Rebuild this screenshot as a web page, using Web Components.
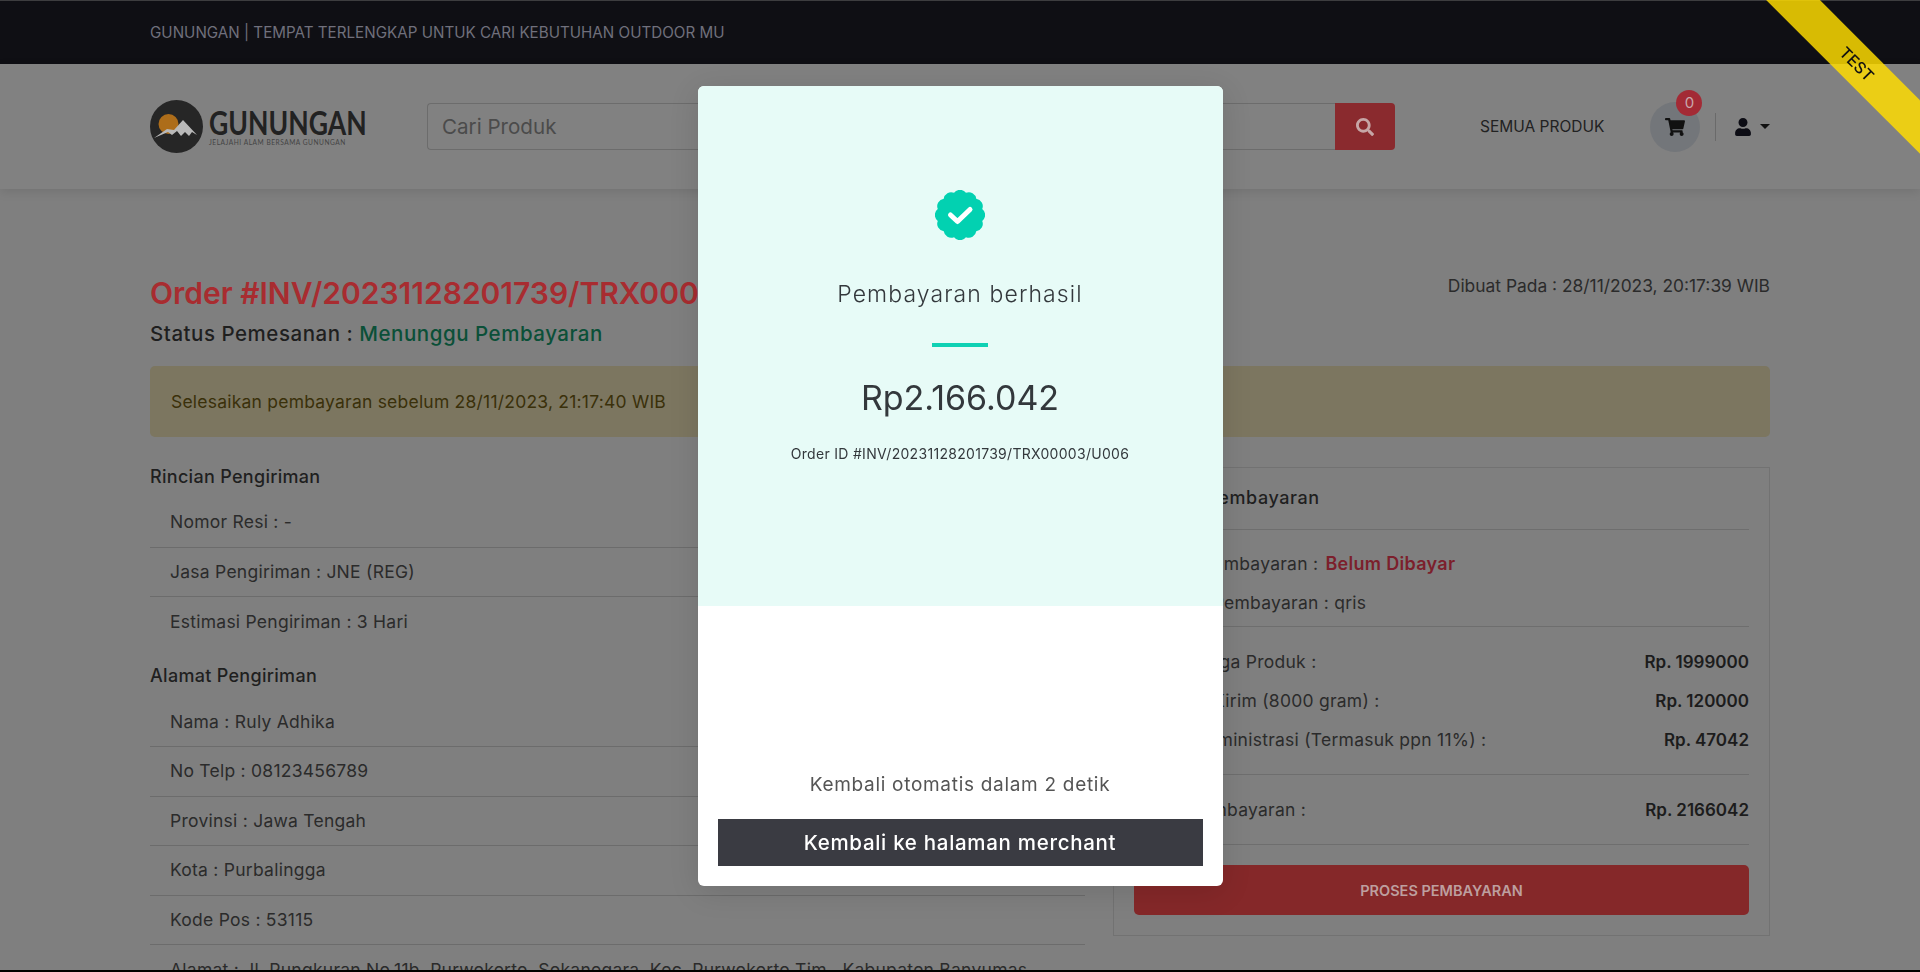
<!DOCTYPE html>
<html lang="id">
<head>
<meta charset="utf-8">
<title>Gunungan</title>
<style>
    html, body { margin: 0; height: 100%; overflow: hidden; }
    body {
        background: #7f7f7f;
        border-top: 1px solid #3d3d3f;
        box-sizing: border-box;
        color: #262626;
        font-family: Inter, "Noto Sans", sans-serif;
    }
    .screen-edge { position: fixed; left: 0; right: 0; bottom: 0; height: 2px; background: #000; z-index: 30; }
</style>
</head>
<body>
<top-bar>GUNUNGAN | TEMPAT TERLENGKAP UNTUK CARI KEBUTUHAN OUTDOOR MU</top-bar>
<site-header></site-header>
<order-page></order-page>
<pay-modal></pay-modal>
<test-ribbon>TEST</test-ribbon>
<div class="screen-edge"></div>

<script>
class TopBar extends HTMLElement {
    constructor() {
        super();
        this.attachShadow({mode: 'open'}).innerHTML = `
            <style>
                :host { display: flex; align-items: center; height: 63px; padding: 0 150px; background: #0f0f14; color: #70707c; font-size: 15.2px; }
            </style>
            <slot></slot>
        `;
    }
}

class SiteHeader extends HTMLElement {
    constructor() {
        super();
        this.attachShadow({mode: 'open'}).innerHTML = `
            <style>
                :host { display: flex; align-items: center; height: 125px; padding: 0 150px; background: #818181; box-shadow: 0 3px 10px rgba(0,0,0,.1); position: relative; }
                .logo { display: flex; align-items: center; gap: 6px; width: 277px; flex: none; }
                .logo svg { width: 53px; height: 53px; flex: none; }
                .brand { padding-top: 1px; }
                .name { display: block; width: 156px; color: #222; font: 700 33px/28px Lato, sans-serif; transform: scaleX(.805); transform-origin: left; white-space: nowrap; }
                .tag { display: block; font: 400 6.6px/9px Lato, sans-serif; letter-spacing: .52px; color: #444; margin-top: 2px; white-space: nowrap; }
                .search { display: flex; width: 968px; height: 47px; flex: none; }
                .search .field { flex: 1; display: flex; align-items: center; box-sizing: border-box; padding-left: 14px; border: 1px solid #6c6c6c; border-right: 0; border-radius: 4px 0 0 4px; color: #4b4b4b; font-size: 20.6px; }
                .search .go { width: 60px; background: #8a2a2e; border-radius: 0 4px 4px 0; display: flex; align-items: center; justify-content: center; }
                .search svg { width: 18px; height: 18px; fill: #c6a6a6; }
                .all { margin-left: 85px; font-size: 15.5px; color: #222; white-space: nowrap; }
                .cart { margin-left: 46px; width: 50px; height: 50px; border-radius: 50%; background: #73767a; display: flex; align-items: center; justify-content: center; position: relative; flex: none; }
                .cart svg { width: 20px; height: 18px; fill: #111; }
                .badge { position: absolute; top: -12px; right: -2px; width: 26px; height: 26px; border-radius: 50%; background: #a32a35; color: #c9a8ac; font-size: 15px; display: flex; align-items: center; justify-content: center; }
                .sep { margin-left: 15px; width: 1px; height: 28px; background: #6a6a6a; }
                .user { margin-left: 19px; width: 16px; height: 18px; fill: #0c0c14; flex: none; }
                .caret { margin-left: 9px; width: 0; height: 0; border: 5px solid transparent; border-top-color: #111; border-bottom: 0; }
            </style>
            <div class="logo">
                <svg viewBox="0 0 53 53">
                    <circle cx="26.5" cy="26.5" r="26.5" fill="#262626"/>
                    <circle cx="18.5" cy="24" r="10" fill="#ad6d1a"/>
                    <path d="M4 38 L17 29 L24 30 L33 20 L47 35 L42 32 L39 36 L35 32 L31 36 L27 31 L22 35 L18 32 L11 35 Z" fill="#b9b9b9"/>
                </svg>
                <div class="brand"><span class="name">GUNUNGAN</span><span class="tag">JELAJAHI ALAM BERSAMA GUNUNGAN</span></div>
            </div>
            <div class="search">
                <div class="field">Cari Produk</div>
                <div class="go"><svg viewBox="0 0 512 512"><path d="M505 442.7L405.3 343c-4.5-4.5-10.6-7-17-7H372c27.6-35.3 44-79.7 44-128C416 93.1 322.9 0 208 0S0 93.1 0 208s93.1 208 208 208c48.3 0 92.7-16.4 128-44v16.3c0 6.4 2.5 12.5 7 17l99.7 99.7c9.4 9.4 24.6 9.4 33.9 0l28.3-28.3c9.4-9.4 9.4-24.6.1-34zM208 336c-70.7 0-128-57.2-128-128 0-70.7 57.2-128 128-128 70.7 0 128 57.2 128 128 0 70.7-57.2 128-128 128z"/></svg></div>
            </div>
            <div class="all">SEMUA PRODUK</div>
            <div class="cart">
                <svg viewBox="0 0 576 512"><path d="M528.12 301.319l47.273-208C578.806 78.301 567.391 64 551.99 64H159.208l-9.166-44.81C147.758 8.021 137.93 0 126.529 0H24C10.745 0 0 10.745 0 24v16c0 13.255 10.745 24 24 24h69.883l70.248 343.435C147.325 417.1 136 435.222 136 456c0 30.928 25.072 56 56 56s56-25.072 56-56c0-15.674-6.447-29.835-16.824-40h209.647C430.447 426.165 424 440.326 424 456c0 30.928 25.072 56 56 56s56-25.072 56-56c0-22.172-12.888-41.332-31.579-50.405l5.517-24.276c3.413-15.018-8.002-29.319-23.403-29.319H218.117l-6.545-32h293.145c11.206 0 20.92-7.754 23.403-18.681z"/></svg>
                <span class="badge">0</span>
            </div>
            <div class="sep"></div>
            <svg class="user" viewBox="0 0 448 512"><path d="M224 256c70.7 0 128-57.3 128-128S294.7 0 224 0 96 57.3 96 128s57.3 128 128 128zm89.6 32h-16.7c-22.2 10.2-46.9 16-72.9 16s-50.6-5.8-72.9-16h-16.7C60.2 288 0 348.2 0 422.4V464c0 26.5 21.5 48 48 48h352c26.5 0 48-21.5 48-48v-41.6c0-74.2-60.2-134.4-134.4-134.4z"/></svg>
            <div class="caret"></div>
        `;
    }
}

class ListRow extends HTMLElement {
    constructor() {
        super();
        this.attachShadow({mode: 'open'}).innerHTML = `
            <style>
                :host { display: flex; align-items: center; box-sizing: border-box; height: 49.6px; padding: 0 20px 1px; border-bottom: 1px solid #6c6c6c; font-size: 17.5px; letter-spacing: .25px; color: #2b2b2b; white-space: nowrap; }
                :host(:last-of-type) { border-bottom: 0; }
            </style>
            <slot></slot>
        `;
    }
}

class PayRow extends HTMLElement {
    constructor() {
        super();
        this.attachShadow({mode: 'open'}).innerHTML = `
            <style>
                :host { display: flex; justify-content: space-between; align-items: center; height: 39px; font-size: 17.5px; letter-spacing: .25px; color: #2b2b2b; white-space: nowrap; }
                .label { padding-left: 9px; }
                .val { font-size: 17px; letter-spacing: 0; font-weight: 600; color: #1c1c1c; }
            </style>
            <span class="label"><slot></slot></span>
            <span class="val"><slot name="value"></slot></span>
        `;
    }
}

class PayCard extends HTMLElement {
    constructor() {
        super();
        this.attachShadow({mode: 'open'}).innerHTML = `
            <style>
                :host { display: block; box-sizing: border-box; height: 469px; margin-top: 4px; padding: 16px 20px 0; border: 1px solid #727272; }
                h4 { margin: 0; font: 500 18px/27px Inter, sans-serif; letter-spacing: .57px; color: #1f1f1f; }
                hr { border: 0; border-top: 1px solid #6e6e6e; margin: 0; }
                .s1 { padding-top: 14px; }
                .s2 { padding: 15px 0 0; }
                .s3 { padding: 15px 0 15px; }
                .late { margin-left: 2px; font-size: 18px; letter-spacing: .3px; font-weight: 600; color: #7c1f2c; }
                button { display: block; width: 100%; height: 50px; margin-top: 20px; border: 0; border-radius: 5px; background: #852829; color: #bd9f9f; font: 600 14.5px Inter, sans-serif; }
            </style>
            <h4>Rincian Pembayaran</h4>
            <hr style="margin-top:18px">
            <div class="s1">
                <pay-row>Status Pembayaran : <span class="late">Belum Dibayar</span></pay-row>
                <pay-row>Metode Pembayaran : qris</pay-row>
            </div>
            <hr style="margin-top:4px">
            <div class="s2">
                <pay-row>Total Harga Produk :<span slot="value">Rp. 1999000</span></pay-row>
                <pay-row>Ongkos Kirim (8000 gram) :<span slot="value">Rp. 120000</span></pay-row>
                <pay-row>Biaya Administrasi (Termasuk ppn 11%) :<span slot="value">Rp. 47042</span></pay-row>
            </div>
            <hr style="margin-top:15px">
            <div class="s3">
                <pay-row>Total Pembayaran :<span slot="value">Rp. 2166042</span></pay-row>
            </div>
            <hr>
            <button>PROSES PEMBAYARAN</button>
        `;
    }
}

class OrderPage extends HTMLElement {
    constructor() {
        super();
        this.attachShadow({mode: 'open'}).innerHTML = `
            <style>
                :host { display: block; padding: 84px 150px 0; }
                .top { display: flex; justify-content: space-between; }
                h1 { margin: 0; font: 600 30px/40px Inter, sans-serif; color: #a82c30; white-space: nowrap; }
                .made { font-size: 17.4px; line-height: 27px; margin-top: -1px; color: #2b2b2b; }
                .status { margin-top: 6px; font: 500 20.5px/30px Inter, sans-serif; letter-spacing: .53px; color: #1f1f1f; }
                .status span { color: #0b5038; }
                .alert { margin-top: 17px; height: 71px; box-sizing: border-box; padding-left: 21px; display: flex; align-items: center; background: #7c7660; border-radius: 5px; color: #3a300a; font-size: 17.5px; letter-spacing: .22px; }
                .cols { display: grid; grid-template-columns: 935px 657px; gap: 28px; margin-top: 26px; }
                h5 { margin: 0 0 7px; font: 500 18px/28px Inter, sans-serif; letter-spacing: .3px; color: #1f1f1f; }
                h5.next { margin-top: 15.2px; margin-bottom: 7.4px; }
            </style>
            <div class="top">
                <h1>Order #INV/20231128201739/TRX00003/U006</h1>
                <div class="made">Dibuat Pada : 28/11/2023, 20:17:39 WIB</div>
            </div>
            <div class="status">Status Pemesanan : <span>Menunggu Pembayaran</span></div>
            <div class="alert">Selesaikan pembayaran sebelum 28/11/2023, 21:17:40 WIB</div>
            <div class="cols">
                <section>
                    <h5>Rincian Pengiriman</h5>
                    <div>
                        <list-row>Nomor Resi : -</list-row>
                        <list-row>Jasa Pengiriman : JNE (REG)</list-row>
                        <list-row>Estimasi Pengiriman : 3 Hari</list-row>
                    </div>
                    <h5 class="next">Alamat Pengiriman</h5>
                    <div>
                        <list-row>Nama : Ruly Adhika</list-row>
                        <list-row>No Telp : 08123456789</list-row>
                        <list-row>Provinsi : Jawa Tengah</list-row>
                        <list-row>Kota : Purbalingga</list-row>
                        <list-row>Kode Pos : 53115</list-row>
                        <list-row>Alamat : Jl. Pungkuran No.11b, Purwokerto, Sokanegara, Kec. Purwokerto Tim., Kabupaten Banyumas</list-row>
                    </div>
                </section>
                <pay-card></pay-card>
            </div>
        `;
    }
}

class PayModal extends HTMLElement {
    constructor() {
        super();
        this.attachShadow({mode: 'open'}).innerHTML = `
            <style>
                :host { position: fixed; inset: 0; z-index: 10; display: flex; align-items: center; justify-content: center; }
                .box { width: 525px; height: 800px; background: #fff; border-radius: 6px; overflow: hidden; display: flex; flex-direction: column; box-shadow: 0 6px 30px rgba(0,0,0,.12); }
                .paid { height: 520px; flex: none; box-sizing: border-box; padding-top: 104px; background: #e7fbf7; display: flex; flex-direction: column; align-items: center; color: #33383c; }
                .paid svg { width: 50px; height: 50px; flex: none; }
                .title { margin-top: 38px; font-size: 23px; letter-spacing: 1.1px; line-height: 32px; font-weight: 300; }
                .line { margin-top: 33px; width: 56px; height: 4px; background: #0fd1b4; }
                .amount { margin-top: 26px; font-size: 34px; line-height: 50px; font-weight: 400; }
                .oid { margin-top: 21px; font-size: 14px; letter-spacing: .3px; line-height: 20px; }
                .back { flex: 1; display: flex; flex-direction: column; justify-content: flex-end; align-items: center; padding: 0 20px 20px; }
                .auto { font-size: 19px; letter-spacing: .7px; line-height: 26px; color: #555; margin-bottom: 21px; }
                button { width: 100%; height: 47px; border: 0; background: #3a3b42; color: #fff; font: 500 20.5px Inter, sans-serif; letter-spacing: .7px; }
            </style>
            <div class="box">
                <div class="paid">
                    <svg viewBox="0 0 50 50"><path id="seal" fill="#02d1b1"/><polyline points="15.5,25 22.5,31.5 35,19.5" fill="none" stroke="#fff" stroke-width="5" stroke-linecap="round" stroke-linejoin="round"/></svg>
                    <div class="title">Pembayaran berhasil</div>
                    <div class="line"></div>
                    <div class="amount">Rp2.166.042</div>
                    <div class="oid">Order ID #INV/20231128201739/TRX00003/U006</div>
                </div>
                <div class="back">
                    <div class="auto">Kembali otomatis dalam 2 detik</div>
                    <button>Kembali ke halaman merchant</button>
                </div>
            </div>
        `;
        // scalloped seal, 12 round bumps with one on top
        let d = '';
        for (let i = 0; i <= 12; i++) {
            let a = (i + .5) * Math.PI / 6 - Math.PI / 2;
            let x = (25 + 23 * Math.cos(a)).toFixed(2), y = (25 + 23 * Math.sin(a)).toFixed(2);
            d += i ? `A7.5 7.5 0 0 1 ${x} ${y} ` : `M${x} ${y} `;
        }
        this.shadowRoot.querySelector('#seal').setAttribute('d', d + 'Z');
    }
}

class TestRibbon extends HTMLElement {
    constructor() {
        super();
        this.attachShadow({mode: 'open'}).innerHTML = `
            <style>
                :host { position: fixed; top: 0; right: 0; width: 160px; height: 160px; overflow: hidden; z-index: 20; }
                div { position: absolute; left: -53.5px; top: 44.5px; width: 300px; height: 38px; transform: rotate(45deg); background: rgba(255,220,0,.84); color: #111; font-size: 16px; font-weight: 500; display: flex; align-items: center; justify-content: center; }
            </style>
            <div><slot></slot></div>
        `;
    }
}

customElements.define('top-bar', TopBar);
customElements.define('site-header', SiteHeader);
customElements.define('list-row', ListRow);
customElements.define('pay-row', PayRow);
customElements.define('pay-card', PayCard);
customElements.define('order-page', OrderPage);
customElements.define('pay-modal', PayModal);
customElements.define('test-ribbon', TestRibbon);
</script>
</body>
</html>
